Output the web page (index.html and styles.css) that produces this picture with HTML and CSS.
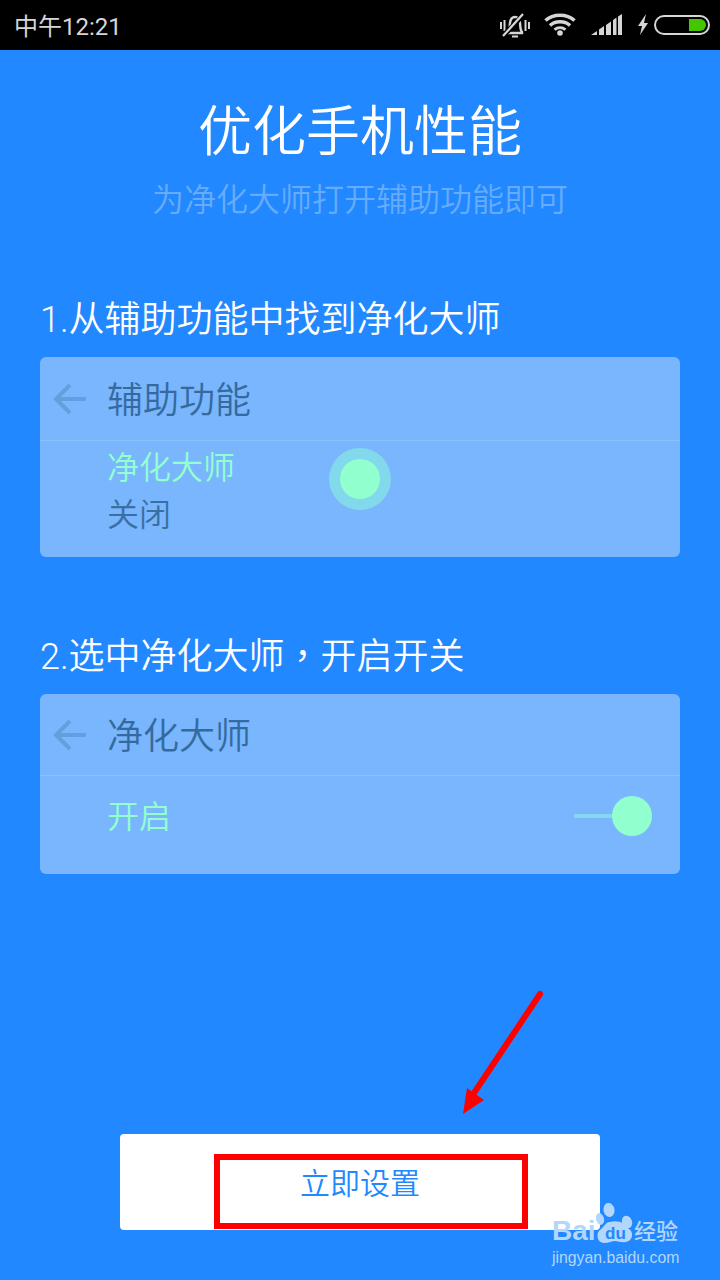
FILE: index.html
```html
<!DOCTYPE html>
<html lang="zh">
<head>
<meta charset="utf-8">
<title>优化手机性能</title>
<link rel="stylesheet" href="styles.css">
</head>
<body>
<div class="screen">
  <header class="status">
    <span class="time">中午12:21</span>
    <div class="status-icons">
      <svg class="ic-bell" width="30" height="26" viewBox="0 0 30 26">
        <path d="M8 20c2-2 1.500-5 2-9 .5-4 2.500-6 5-6s4.500 2 5 6c.5 4 0 7 2 9v1H8z" fill="none" stroke="#d6d6d6" stroke-width="2.400"/>
        <path d="M12 24.500h6" stroke="#d6d6d6" stroke-width="2"/>
        <path d="M1 10v7M4.500 8v11M25.500 8v11M29 10v7" stroke="#d6d6d6" stroke-width="2"/>
        <path d="M3 24L24 2" stroke="#000" stroke-width="5"/>
        <path d="M3 24L23 2" stroke="#d6d6d6" stroke-width="2.200"/>
      </svg>
      <svg class="ic-wifi" width="32" height="24" viewBox="0 0 32 24">
        <path d="M1.500 8.500C9 1.500 23 1.500 30.500 8.500" fill="none" stroke="#d6d6d6" stroke-width="3.400"/>
        <path d="M6 13.500C11 8.500 21 8.500 26 13.500" fill="none" stroke="#d6d6d6" stroke-width="3.400"/>
        <path d="M10.500 17.800C13.500 15 18.500 15 21.500 17.800" fill="none" stroke="#d6d6d6" stroke-width="2.800"/>
        <circle cx="16" cy="21" r="2.800" fill="#d6d6d6"/>
      </svg>
      <svg class="ic-signal" width="32" height="22" viewBox="0 0 32 22">
        <path d="M0 21l6-4v4zM8 15.500l5-3.500v9H8zM15 11l5-3.500V21h-5zM22 6l3.500-2.500V21H22zM27 2.500L31 0v21h-4z" fill="#d6d6d6"/>
      </svg>
      <svg class="ic-bolt" width="12" height="22" viewBox="0 0 12 22">
        <path d="M9 0L1 12h4L3 21l8-12H7z" fill="#d6d6d6"/>
      </svg>
      <div class="battery"><span class="battery-fill"></span></div>
    </div>
  </header>

  <main class="content">
    <h1 class="title">优化手机性能</h1>
    <p class="subtitle">为净化大师打开辅助功能即可</p>

    <section class="step step-first">
      <h2 class="step-title">1.从辅助功能中找到净化大师</h2>
      <div class="card">
        <div class="card-head">
          <svg class="back" width="34" height="34" viewBox="0 0 34 34"><path d="M33 17H4M17 3L3 17l14 14" fill="none" stroke="#619fdf" stroke-width="4"/></svg>
          <span class="card-title">辅助功能</span>
        </div>
        <div class="card-row row-service">
          <div class="row-labels">
            <div class="label-green">净化大师</div>
            <div class="label-dark">关闭</div>
          </div>
          <span class="halo"><span class="dot"></span></span>
        </div>
      </div>
    </section>

    <section class="step step-second">
      <h2 class="step-title">2.选中净化大师<span class="comma" lang="zh-TW">，</span>开启开关</h2>
      <div class="card">
        <div class="card-head head-second">
          <svg class="back" width="34" height="34" viewBox="0 0 34 34"><path d="M33 17H4M17 3L3 17l14 14" fill="none" stroke="#619fdf" stroke-width="4"/></svg>
          <span class="card-title">净化大师</span>
        </div>
        <div class="card-row row-switch">
          <div class="label-green label-on">开启</div>
          <div class="switch"><span class="track"></span><span class="dot"></span></div>
        </div>
      </div>
    </section>

    <div class="action">
      <button class="btn">立即设置</button>
    </div>
  </main>

  <div class="mark-box"></div>
  <svg class="mark-arrow" width="120" height="140" viewBox="0 0 120 140">
    <path d="M100 14L34 113" stroke="#fe0000" stroke-width="6" stroke-linecap="round"/>
    <path d="M23 134L27 108 44 120z" fill="#fe0000"/>
  </svg>

  <div class="watermark">
    <div class="wm-top">
      <span class="wm-bai">Bai</span>
      <svg class="wm-paw" width="40" height="44" viewBox="0 0 40 44">
        <ellipse cx="4" cy="17" rx="4" ry="6" fill="#b3d6fb" transform="rotate(-15 4 17)"/>
        <ellipse cx="13" cy="8" rx="5.500" ry="7" fill="#b3d6fb" transform="rotate(-10 13 8)"/>
        <ellipse cx="31" cy="20" rx="5" ry="6.500" fill="#b3d6fb" transform="rotate(-20 31 20)"/>
        <path d="M13 20c-4 1-5 5-8 7-6 4-4 14 3 14 5 0 8-2 11-2s7 2 11 1c7-1 8-10 3-13-4-3-5-6-9-7-3-1-7-1-10 0z" fill="#b3d6fb"/>
      </svg>
      <span class="wm-du">du</span>
      <span class="wm-jy">经验</span>
    </div>
    <div class="wm-url">jingyan.baidu.com</div>
  </div>
</div>
</body>
</html>
```
FILE: styles.css
```css
* { box-sizing: border-box; }
html, body { margin: 0; padding: 0; }
body {
  width: 720px;
  height: 1280px;
  overflow: hidden;
  font-family: Roboto, "Noto Sans CJK SC", "Noto Sans", sans-serif;
  font-weight: 350;
}
.screen {
  position: relative;
  width: 720px;
  height: 1280px;
  background: #2288ff;
  display: flex;
  flex-direction: column;
}
.status {
  height: 50px;
  flex: none;
  background: #000;
  color: #d6d6d6;
  display: flex;
  align-items: center;
  justify-content: space-between;
  padding: 0 10px 0 14px;
}
.time { font-size: 24px; line-height: 50px; font-weight: 400; margin-top: 4px; }
.status-icons { display: flex; align-items: center; }
.ic-bell { margin-right: 14px; }
.ic-wifi { margin-right: 15px; margin-top: -2px; }
.ic-signal { margin-right: 14px; }
.ic-bolt { margin-right: 5px; }
.battery {
  width: 56px;
  height: 20px;
  border: 2px solid #d6d6d6;
  border-radius: 10px;
  display: flex;
  justify-content: flex-end;
  padding: 2px 2px;
}
.battery-fill {
  width: 17px;
  background: #44c600;
  border-radius: 0 7px 7px 0;
}
.content {
  flex: 1;
  display: flex;
  flex-direction: column;
  padding: 0 40px;
}
.title {
  margin: 46px 0 0;
  font-size: 54px;
  line-height: 74px;
  font-weight: 350;
  color: #fff;
  text-align: center;
}
.subtitle {
  margin: 8px 0 0;
  font-size: 32px;
  line-height: 44px;
  color: #66acfb;
  text-align: center;
}
.step-first { margin-top: 73px; }
.step-second { margin-top: 75px; }
.step-title {
  margin: 0;
  font-size: 36px;
  line-height: 50px;
  font-weight: 350;
  color: #fff;
}
.comma { font-family: "Noto Sans CJK TC", sans-serif; line-height: 0; }
.card {
  margin-top: 12px;
  background: #79b6fe;
  border-radius: 6px;
  overflow: hidden;
}
.card-head {
  height: 84px;
  border-bottom: 1px solid #8ac0fe;
  display: flex;
  align-items: center;
  padding-left: 13px;
}
.head-second { height: 82px; }
.back { flex: none; }
.card-title {
  margin-left: 20px;
  margin-top: 5px;
  font-size: 36px;
  line-height: 50px;
  color: #356a9f;
}
.card-row { padding-left: 67px; }
.row-service {
  height: 116px;
  display: flex;
  align-items: flex-start;
}
.row-labels { width: 222px; margin-top: 4px; }
.label-green { font-size: 32px; line-height: 47px; color: #92ffcf; }
.label-dark { font-size: 32px; line-height: 47px; color: #3a6fa3; }
.label-on { margin-top: 4px; }
.halo {
  width: 62px;
  height: 62px;
  border-radius: 50%;
  background: #82d9eb;
  display: flex;
  align-items: center;
  justify-content: center;
  margin-top: 7px;
}
.dot {
  width: 40px;
  height: 40px;
  border-radius: 50%;
  background: #92ffcf;
  flex: none;
}
.row-switch {
  height: 98px;
  display: flex;
  align-items: center;
  justify-content: space-between;
  padding-right: 28px;
  padding-bottom: 20px;
}
.switch { display: flex; align-items: center; margin-top: 1px; }
.track { width: 40px; height: 4px; background: #82d9eb; margin-right: -2px; }
.action {
  margin-top: auto;
  margin-bottom: 50px;
  display: flex;
  justify-content: center;
}
.btn {
  width: 480px;
  height: 96px;
  border: 0;
  border-radius: 4px;
  background: #fff;
  color: #2288ff;
  font-family: inherit;
  font-weight: 350;
  font-size: 30px;
  line-height: 92px;
  padding: 4px 0 0;
}
.mark-box {
  position: absolute;
  left: 214px;
  top: 1154px;
  width: 314px;
  height: 75px;
  border: 6px solid #fe0000;
}
.mark-arrow {
  position: absolute;
  left: 440px;
  top: 980px;
}
.watermark {
  position: absolute;
  left: 552px;
  top: 1202px;
  color: #b3d6fb;
}
.wm-top { display: flex; align-items: flex-end; height: 44px; }
.wm-bai {
  font-family: "Liberation Sans", sans-serif;
  font-weight: 700;
  font-size: 28px;
  line-height: 30px;
  width: 44px;
}
.wm-du {
  position: absolute;
  left: 53px;
  top: 22px;
  color: #2288ff;
  font-family: "Liberation Sans", sans-serif;
  font-weight: 700;
  font-size: 17px;
  line-height: 20px;
}
.wm-jy {
  font-size: 22px;
  line-height: 26px;
  margin-left: -2px;
  font-weight: 500;
  margin-bottom: 1px;
}
.wm-url {
  font-family: "Liberation Sans", sans-serif;
  font-weight: 400;
  font-size: 15.800px;
  line-height: 20px;
  margin-top: 2px;
  white-space: nowrap;
}
```
